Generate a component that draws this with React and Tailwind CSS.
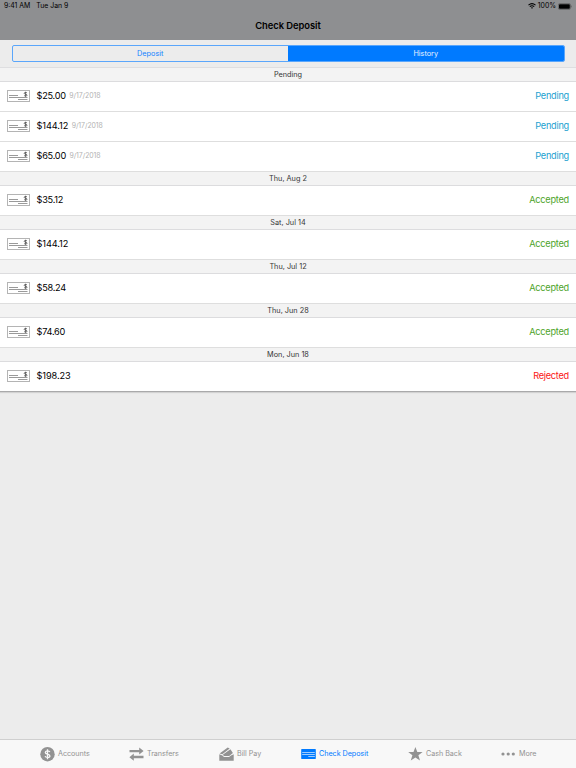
const pending = [
  ['$25.00', '9/17/2018'],
  ['$144.12', '9/17/2018'],
  ['$65.00', '9/17/2018'],
];

const history = [
  ['Thu, Aug 2', '$35.12', 'Accepted'],
  ['Sat, Jul 14', '$144.12', 'Accepted'],
  ['Thu, Jul 12', '$58.24', 'Accepted'],
  ['Thu, Jun 28', '$74.60', 'Accepted'],
  ['Mon, Jun 18', '$198.23', 'Rejected'],
];

const statusColor = {
  Pending: 'text-[#1b9fd0]',
  Accepted: 'text-[#4ea32a]',
  Rejected: 'text-[#fb1414]',
};

function CheckIcon() {
  return (
    <svg width="23" height="13" viewBox="0 0 23 13" className="shrink-0">
      <rect x="0.5" y="1.5" width="22" height="11" fill="#fff" stroke="#b4b4b4" />
      <path d="M2 6.5h9M2 8.5h18.5M11 10.5h9.5" stroke="#9a9a9a" strokeWidth="1" fill="none" />
      <path d="M20 3.9c-.5-.6-2.8-.8-2.8.4 0 1.2 2.9.7 2.9 1.9 0 1.1-2.4 1-3 .3M18.6 2.8v5" stroke="#4b4b4b" strokeWidth="0.8" fill="none" />
    </svg>
  );
}

function SectionHeader({ children }) {
  return (
    <div className="flex h-[14px] items-center justify-center border-b border-[#dcdcde] bg-[#f3f3f3] text-[7.3px] leading-none text-[#333]">
      {children}
    </div>
  );
}

function Row({ amount, date, status, last }) {
  return (
    <div className={`flex h-[30px] items-center bg-white pr-[7px] pb-[2px] pl-[7px] ${last ? 'border-b border-[#a9a9aa]' : 'border-b border-[#dedede]'}`}>
      <CheckIcon />
      <span className={`ml-[6.5px] text-[9.2px] leading-none text-black ${amount.length === 6 ? 'tracking-[-0.25px]' : 'tracking-[-0.1px]'}`}>{amount}</span>
      {date && <span className="mt-[2px] ml-[3.5px] text-[6.9px] leading-none tracking-[-0.05px] text-[#b2b2b2]">{date}</span>}
      <span className={`ml-auto text-[9.2px] leading-none tracking-[-0.25px] ${statusColor[status]}`}>{status}</span>
    </div>
  );
}

function DollarIcon() {
  return (
    <svg width="15" height="15" viewBox="0 0 15 15">
      <circle cx="7.5" cy="7.2" r="7.2" fill="currentColor" />
      <path d="M9.8 5C9.2 3.3 5.3 3.4 5.3 5.4c0 2.2 4.6 1.3 4.6 3.5 0 2-4.2 2.1-4.8.2M7.5 2.2v10" stroke="#f8f8f8" strokeWidth="1.3" fill="none" />
    </svg>
  );
}

function TransferIcon() {
  return (
    <svg width="15" height="14" viewBox="0 0 15 14" fill="currentColor">
      <path d="M.5 2.9h9.7V.5l4.4 3.6-4.4 3.5V5.2H.5zM14.5 8.8H4.8V6.6L.4 10.2l4.4 3.5v-2.5h9.7z" />
    </svg>
  );
}

function BillIcon() {
  return (
    <svg width="15" height="14" viewBox="0 0 15 14" fill="currentColor">
      <path d="M.3 7.2 3.4 8.6 5 9.9h5l2-1.3 2.7-1.4v6.5H.3z" />
      <path d="M.6 6.4 8.7.5l2 1-7.4 5.7zM3.8 7.7l7.6-5.5 2.5 3.7-3.7 3H5z" />
    </svg>
  );
}

function DepositIcon() {
  return (
    <svg width="15" height="10" viewBox="0 0 15 10">
      <rect x="0.2" width="14.6" height="10" rx="0.4" fill="currentColor" />
      <path d="M1.2 3.5h12.6M1.2 5.5h12.6M7.3 7.5h6.5" stroke="#d4e8ff" strokeWidth="0.75" />
    </svg>
  );
}

function StarIcon() {
  return (
    <svg width="15" height="14" viewBox="0 0 15 14" fill="currentColor">
      <path d="m7.4.1 1.9 4.9h5.3l-4.2 3.2 1.6 5.4-4.6-3.2-4.6 3.2 1.6-5.4L.2 5h5.3z" />
    </svg>
  );
}

function MoreIcon() {
  return (
    <svg width="15" height="4" viewBox="0 0 15 4" fill="currentColor">
      <circle cx="2" cy="2" r="1.6" />
      <circle cx="7.2" cy="2" r="1.6" />
      <circle cx="12.3" cy="2" r="1.6" />
    </svg>
  );
}

const tabs = [
  ['Accounts', DollarIcon, 'w-[89px]'],
  ['Transfers', TransferIcon, 'w-[90px]'],
  ['Bill Pay', BillIcon, 'w-[82px]'],
  ['Check Deposit', DepositIcon, 'w-[107px]'],
  ['Cash Back', StarIcon, 'w-[93px]'],
  ['More', MoreIcon, 'w-[60px]'],
];

export default function App() {
  return (
    <div className="flex h-[768px] w-[576px] flex-col overflow-hidden bg-[#ececec] font-['Inter','Liberation_Sans',sans-serif]">
      <header className="h-10 shrink-0 bg-[#8e8f91] text-black">
        <div className="flex h-3 items-center pr-[4px] pl-[4px] text-[6.9px] leading-none">
          <span>9:41 AM</span>
          <span className="ml-[6px]">Tue Jan 9</span>
          <svg width="8" height="6" viewBox="0 0 8 6" className="ml-auto" fill="none" stroke="currentColor" strokeWidth="1.1">
            <path d="M.5 2.1Q4-.8 7.5 2.1M1.8 3.6Q4 1.8 6.2 3.6" />
            <path d="M4 5.8 2.9 4.7Q4 3.9 5.1 4.7z" fill="currentColor" stroke="none" />
          </svg>
          <span className="ml-[2px]">100%</span>
          <svg width="14" height="7" viewBox="0 0 14 7" className="ml-[2px]">
            <rect x="0.4" y="0.6" width="12" height="5.8" rx="1.3" fill="none" stroke="#444" strokeWidth="0.5" />
            <rect x="1" y="1.2" width="10.8" height="4.6" rx="0.8" />
            <path d="M13.1 2.6v1.8" stroke="#444" strokeWidth="0.7" />
          </svg>
        </div>
        <h1 className="pt-[8px] text-center text-[9.4px] leading-[11px] font-semibold tracking-[-0.05px]">Check Deposit</h1>
      </header>
      <div className="h-[28px] shrink-0 border-b border-[#dedee0] px-[11.5px] pt-[5px]">
        <div className="flex h-[17px] overflow-hidden rounded-[2px] border border-[#5aa6fb] text-[7.3px] leading-none">
          <div className="flex flex-1 items-center justify-center text-[#1483ff]">Deposit</div>
          <div className="flex flex-1 items-center justify-center bg-[#007aff] text-[#e6f2ff]">History</div>
        </div>
      </div>
      <main className="flex-1">
        <div className="shadow-[0_1px_1px_#d2d2d2]">
          <SectionHeader>Pending</SectionHeader>
          {pending.map(([amount, date]) => (
            <Row key={amount} amount={amount} date={date} status="Pending" />
          ))}
          {history.map(([day, amount, status], i) => (
            <section key={day}>
              <SectionHeader>{day}</SectionHeader>
              <Row amount={amount} status={status} last={i === history.length - 1} />
            </section>
          ))}
        </div>
      </main>
      <nav className="flex h-[29px] shrink-0 items-center border-t border-[#cfcfcf] bg-[#f8f8f8] pl-[40px] text-[7.2px] leading-none tracking-[-0.04px]">
        {tabs.map(([label, Icon, width]) => (
          <div key={label} className={`flex shrink-0 items-center gap-[3px] ${width} ${label === 'Check Deposit' ? 'text-[#007aff]' : 'text-[#929292]'}`}>
            <Icon />
            <span className="whitespace-nowrap">{label}</span>
          </div>
        ))}
      </nav>
    </div>
  );
}
